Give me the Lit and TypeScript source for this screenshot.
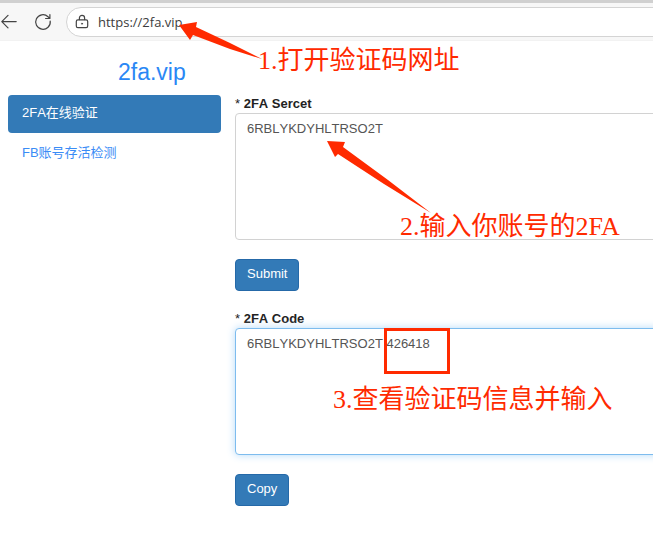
import { LitElement, html, css } from "lit";
import { customElement } from "lit/decorators.js";

@customElement("browser-bar")
class BrowserBar extends LitElement {
  static styles = css`
    :host {
      display: block;
      overflow: hidden;
    }
    .bar {
      display: flex;
      align-items: center;
      height: 41px;
      box-sizing: border-box;
      padding-top: 1px;
      border-top: 3px solid #d0d0d0;
      border-bottom: 1px solid #f2f2f2;
      background: #f7f7f7;
    }
    .tool {
      display: flex;
      flex: none;
      padding: 0;
      border: 0;
      background: none;
    }
    .reload {
      margin-left: 16px;
    }
    .address {
      display: flex;
      flex: 1;
      align-items: center;
      gap: 9px;
      height: 30px;
      box-sizing: border-box;
      margin: 0 -24px 0 14px;
      padding-left: 8px;
      border: 1px solid #d4d4d4;
      border-radius: 16px;
      background: #fff;
    }
    .url {
      flex: 1;
      min-width: 0;
      padding: 0;
      border: 0;
      outline: 0;
      background: none;
      color: #3c3c3c;
      font: 13px/18px "Open Sans", "Noto Sans", sans-serif;
    }
    svg {
      fill: none;
      stroke: #444;
      stroke-linecap: round;
      stroke-linejoin: round;
    }
  `;

  render() {
    return html`
      <div class="bar">
        <button class="tool" aria-label="Back">
          <svg width="18" height="18" viewBox="0 0 18 18" stroke-width="1.2">
            <path d="M16.2 8.6H2M8 2.4L1.8 8.6L8 14.8" />
          </svg>
        </button>
        <button class="tool reload" aria-label="Reload">
          <svg width="18" height="18" viewBox="0 0 18 18" stroke-width="1.2">
            <path d="M16.2 8A7.3 7.3 0 1 1 14 3.7L15.8 5.4M15.9 1.6V5.5H11.6" />
          </svg>
        </button>
        <div class="address">
          <svg width="14" height="16" viewBox="0 0 14 16" stroke-width="1.2">
            <rect x="1.3" y="5.8" width="11.4" height="7.8" rx="1.6" />
            <path d="M4.4 5.6V4A2.6 2.6 0 0 1 9.6 4V5.6" />
            <circle cx="7" cy="9.7" r=".6" fill="#444" stroke-width=".6" />
          </svg>
          <input class="url" aria-label="Address" value="https://2fa.vip" />
        </div>
      </div>
    `;
  }
}

@customElement("app-root")
class AppRoot extends LitElement {
  static styles = css`
    :host {
      display: block;
      position: relative;
      min-height: 100vh;
      overflow: hidden;
      background: #fff;
      color: #222;
      font: 13px/18px "Liberation Sans", "Noto Sans CJK SC", sans-serif;
      font-kerning: none;
    }
    .title {
      margin: 0;
      padding: 16px 0 8px 118px;
      color: #2a87f5;
      font-size: 23px;
      line-height: 30px;
      font-weight: 400;
    }
    .page {
      display: grid;
      grid-template-columns: 213px 1fr;
      gap: 14px;
      padding-left: 8px;
    }
    .nav {
      display: flex;
      flex-direction: column;
      gap: 2px;
    }
    .link {
      height: 38px;
      box-sizing: border-box;
      padding: 9px 14px;
      border-radius: 4px;
      color: #3a8cf6;
      text-decoration: none;
    }
    .link.active {
      background: #337ab7;
      color: #fff;
    }
    .form {
      display: flex;
      flex-direction: column;
      align-items: flex-start;
      margin-right: -16px;
    }
    .label {
      font-weight: 700;
    }
    .star {
      font-weight: 400;
    }
    .field {
      display: block;
      width: 100%;
      height: 127px;
      box-sizing: border-box;
      margin: 0 0 19px;
      padding: 6px 11px;
      border: 1px solid #d2d2d2;
      border-radius: 4px;
      outline: 0;
      resize: none;
      background: #fff;
      color: #555;
      font: inherit;
      font-kerning: none;
    }
    .field.focused {
      border-color: #7dbcee;
      box-shadow: 0 0 8px #b5daf8;
    }
    .button {
      height: 32px;
      margin: 0 0 19px;
      padding: 0 11px 2px;
      border: 1px solid #2569a8;
      border-radius: 4px;
      background: #337ab7;
      color: #fff;
      font: inherit;
      font-kerning: none;
    }
    .arrows {
      position: absolute;
      top: 0;
      left: 0;
      fill: #ff2a00;
      pointer-events: none;
    }
    .note {
      position: absolute;
      color: #ff2a00;
      font: 26px/36px "Liberation Serif", "Noto Sans CJK SC", serif;
      white-space: nowrap;
    }
    .open {
      top: 43px;
      left: 258px;
    }
    .enter {
      top: 209px;
      left: 400px;
    }
    .check {
      top: 382px;
      left: 333px;
    }
    .frame {
      position: absolute;
      top: 328px;
      left: 384px;
      width: 66px;
      height: 46px;
      box-sizing: border-box;
      border: 3px solid #ff2a00;
      pointer-events: none;
    }
  `;

  render() {
    return html`
      <browser-bar></browser-bar>
      <h1 class="title">2fa.vip</h1>
      <div class="page">
        <nav class="nav">
          <a class="link active" href="#verify">2FA在线验证</a>
          <a class="link" href="#alive">FB账号存活检测</a>
        </nav>
        <main class="form">
          <label class="label" for="secret"><span class="star">*</span> 2FA Sercet</label>
          <textarea class="field" id="secret" spellcheck="false" .value=${"6RBLYKDYHLTRSO2T"}></textarea>
          <button class="button">Submit</button>
          <label class="label" for="code"><span class="star">*</span> 2FA Code</label>
          <textarea class="field focused" id="code" spellcheck="false" .value=${"6RBLYKDYHLTRSO2T 426418"}></textarea>
          <button class="button">Copy</button>
        </main>
      </div>
      <svg class="arrows" width="450" height="230" aria-hidden="true">
        <path d="M179 25L197 22L196 27L230 43L262 59L230 49L193 35L190 40Z" />
        <path d="M327 141L345 142L343 147L388 180L431 213L384 184L338 154L335 157Z" />
      </svg>
      <span class="note open">1.打开验证码网址</span>
      <span class="note enter">2.输入你账号的2FA</span>
      <span class="note check">3.查看验证码信息并输入</span>
      <div class="frame"></div>
    `;
  }
}
